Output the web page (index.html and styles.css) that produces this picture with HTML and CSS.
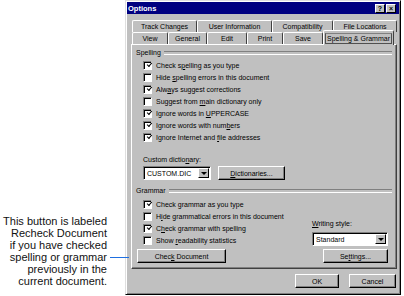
FILE: index.html
```html
<!DOCTYPE html>
<html lang="en">
<head>
    <meta charset="UTF-8">
    <title>Options - Spelling &amp; Grammar</title>
    <link rel="stylesheet" href="styles.css">
</head>
<body>
<div class="page">

    <div class="callout">
        <p class="callout-text">This button is labeled<br>Recheck Document<br>if you have checked<br><span class="pointer">spelling or grammar</span><br>previously in the<br>current document.</p>
    </div>

    <div class="dialog">
        <div class="titlebar">
            <span class="title">Options</span>
            <span class="title-buttons">
                <span class="tb-btn">?</span>
                <span class="tb-btn">&#215;</span>
            </span>
        </div>

        <div class="tabs">
            <div class="tab-row back">
                <div class="tab">Track Changes</div>
                <div class="tab">User Information</div>
                <div class="tab">Compatibility</div>
                <div class="tab">File Locations</div>
            </div>
            <div class="tab-row front">
                <div class="tab">View</div>
                <div class="tab">General</div>
                <div class="tab">Edit</div>
                <div class="tab">Print</div>
                <div class="tab">Save</div>
                <div class="tab active"><span>Spelling &amp; Grammar</span></div>
            </div>
        </div>

        <div class="panel">
            <div class="group-head">Spelling</div>
            <div class="checks">
                <div class="check"><span class="box on"></span><span>Check s<u>p</u>elling as you type</span></div>
                <div class="check"><span class="box"></span><span>Hide <u>s</u>pelling errors in this document</span></div>
                <div class="check"><span class="box on"></span><span>Alw<u>a</u>ys suggest corrections</span></div>
                <div class="check"><span class="box"></span><span>Suggest from <u>m</u>ain dictionary only</span></div>
                <div class="check"><span class="box on"></span><span>Ignore words in <u>U</u>PPERCASE</span></div>
                <div class="check"><span class="box on"></span><span>Ignore words with num<u>b</u>ers</span></div>
                <div class="check"><span class="box on"></span><span>Ignore Internet and <u>f</u>ile addresses</span></div>
            </div>

            <div class="dict">
                <div class="field-label">Custom dictio<u>n</u>ary:</div>
                <div class="dict-row">
                    <div class="combo dict-combo"><span class="combo-value">CUSTOM.DIC</span><span class="combo-arrow"></span></div>
                    <button class="btn dict-btn"><u>D</u>ictionaries...</button>
                </div>
            </div>

            <div class="group-head grammar-head">Grammar</div>
            <div class="grammar-body">
                <div class="grammar-left">
                    <div class="checks">
                        <div class="check"><span class="box on"></span><span>Check grammar as you type</span></div>
                        <div class="check"><span class="box"></span><span>H<u>i</u>de grammatical errors in this document</span></div>
                        <div class="check"><span class="box on"></span><span>C<u>h</u>eck grammar with spelling</span></div>
                        <div class="check"><span class="box"></span><span>Show <u>r</u>eadability statistics</span></div>
                    </div>
                    <button class="btn check-btn">Chec<u>k</u> Document</button>
                </div>
                <div class="grammar-right">
                    <div class="field-label"><u>W</u>riting style:</div>
                    <div class="combo style-combo"><span class="combo-value">Standard</span><span class="combo-arrow"></span></div>
                    <button class="btn settings-btn">Se<u>t</u>tings...</button>
                </div>
            </div>
        </div>

        <div class="footer">
            <button class="btn ok-btn">OK</button>
            <button class="btn cancel-btn">Cancel</button>
        </div>
    </div>

</div>
</body>
</html>
```

FILE: styles.css
```css
/* styles.css */
* {
    box-sizing: border-box;
}

body {
    margin: 0;
    background-color: #fff;
    font-family: "Liberation Sans", Arial, sans-serif;
    color: #000;
}

.page {
    display: flex;
    height: 296px;
}

/* callout on the left */
.callout {
    width: 125px;
    display: flex;
    flex-direction: column;
    justify-content: flex-end;
    padding: 0 18px 9px 0;
}

.callout-text {
    margin: 0;
    font-size: 11px;
    line-height: 12px;
    text-align: right;
    color: #111;
}

.pointer {
    position: relative;
}

.pointer::after {
    content: "";
    position: absolute;
    left: calc(100% + 3px);
    top: 6px;
    width: 19px;
    height: 1px;
    background-color: #1f6fe0;
}

/* dialog window */
.dialog {
    width: 276px;
    height: 295px;
    background-color: #c0c0c0;
    border: 1px solid;
    border-color: #dfdfdf #000 #000 #dfdfdf;
    box-shadow: inset 1px 1px #fff, inset -1px -1px #808080;
    padding: 1px;
    font-size: 7px;
    display: flex;
    flex-direction: column;
}

.titlebar {
    height: 12px;
    background-color: #000080;
    color: #fff;
    display: flex;
    align-items: center;
    justify-content: space-between;
    padding: 0 3px 0 1px;
}

.title {
    font-weight: bold;
    font-size: 7.5px;
}

.title-buttons {
    display: flex;
    gap: 1px;
}

.tb-btn {
    width: 10px;
    height: 9px;
    background-color: #c0c0c0;
    color: #000;
    border: 1px solid;
    border-color: #fff #000 #000 #fff;
    font-size: 7px;
    font-weight: bold;
    line-height: 1;
    display: flex;
    align-items: center;
    justify-content: center;
}

/* tabs */
.tabs {
    margin: 6px 0 0 5px;
}

.tab-row {
    display: grid;
    height: 12px;
}

.tab-row.back {
    grid-template-columns: 65px 75px 61px 64px;
}

.tab-row.front {
    grid-template-columns: 36px 39px 40px 36px 40px 70px;
}

.tab {
    border-top: 1px solid #fff;
    border-left: 1px solid #fff;
    border-right: 1px solid #404040;
    border-radius: 2px 2px 0 0;
    text-align: center;
    line-height: 11px;
    white-space: nowrap;
}

.tab.active {
    margin: -2px -1px -1px 0;
    background-color: #c0c0c0;
    position: relative;
    z-index: 1;
    padding: 2px 1px 0;
}

.tab.active span {
    display: block;
    border: 1px solid #505050;
    border-top-color: #808080;
    line-height: 9px;
}

.panel {
    height: 225px;
    margin: 0 2px 0 4px;
    border: 1px solid;
    border-color: #fff #404040 #404040 #fff;
    box-shadow: inset -1px -1px #808080;
    padding: 3px 4px 0 4px;
}

.group-head {
    display: flex;
    align-items: center;
    gap: 3px;
    height: 10px;
    line-height: 10px;
}

.group-head::after {
    content: "";
    flex: 1;
    height: 2px;
    border-top: 1px solid #808080;
    border-bottom: 1px solid #fff;
}

.checks {
    padding-left: 7px;
    margin-top: 1px;
}

.check {
    display: flex;
    align-items: center;
    gap: 4px;
    height: 12px;
    white-space: nowrap;
}

.box {
    width: 9px;
    height: 9px;
    flex: none;
    background-color: #fff;
    border: 1px solid;
    border-color: #808080 #fff #fff #808080;
    box-shadow: inset 1px 1px #000;
    position: relative;
}

.box.on::after {
    content: "";
    position: absolute;
    left: 2px;
    top: 0px;
    width: 2px;
    height: 4px;
    border: solid #000;
    border-width: 0 1.5px 1.5px 0;
    transform: rotate(40deg);
    transform-origin: 100% 100%;
}

.field-label {
    height: 10px;
    line-height: 10px;
}

.dict {
    padding-left: 7px;
    margin-top: 12px;
}

.dict-row {
    display: flex;
    gap: 7px;
    margin-top: 1px;
}

.grammar-head {
    margin-top: 6px;
}

.grammar-body {
    display: flex;
    justify-content: space-between;
    align-items: flex-end;
    padding-right: 4px;
}

.grammar-body .checks {
    margin-top: 2px;
}

.grammar-right {
    width: 76px;
    display: flex;
    flex-direction: column;
    align-items: flex-end;
}

.grammar-right .field-label {
    align-self: flex-start;
}

/* controls */
.btn {
    height: 14px;
    padding: 0;
    background-color: #c0c0c0;
    color: #000;
    font-family: inherit;
    font-size: 7px;
    border: 1px solid;
    border-color: #fff #000 #000 #fff;
    box-shadow: inset -1px -1px #808080;
}

.combo {
    display: flex;
    height: 14px;
    background-color: #fff;
    border: 1px solid;
    border-color: #808080 #fff #fff #808080;
    box-shadow: inset 1px 1px #000;
    padding: 1px;
}

.combo-value {
    flex: 1;
    padding-left: 2px;
    line-height: 12px;
}

.combo-arrow {
    width: 11px;
    background-color: #c0c0c0;
    border: 1px solid;
    border-color: #fff #000 #000 #fff;
    position: relative;
}

.combo-arrow::after {
    content: "";
    position: absolute;
    left: 2px;
    top: 3px;
    border-left: 3px solid transparent;
    border-right: 3px solid transparent;
    border-top: 3px solid #000;
}

.dict-combo {
    width: 68px;
}

.dict-btn {
    width: 67px;
}

.check-btn {
    width: 89px;
    margin: 3px 0 0 1px;
}

.style-combo {
    width: 76px;
    margin-top: 3px;
}

.settings-btn {
    width: 65px;
    margin-top: 3px;
}

.footer {
    display: flex;
    justify-content: flex-end;
    gap: 10px;
    margin-top: 5px;
    padding-right: 3px;
}

.ok-btn {
    width: 44px;
}

.cancel-btn {
    width: 47px;
}
```
